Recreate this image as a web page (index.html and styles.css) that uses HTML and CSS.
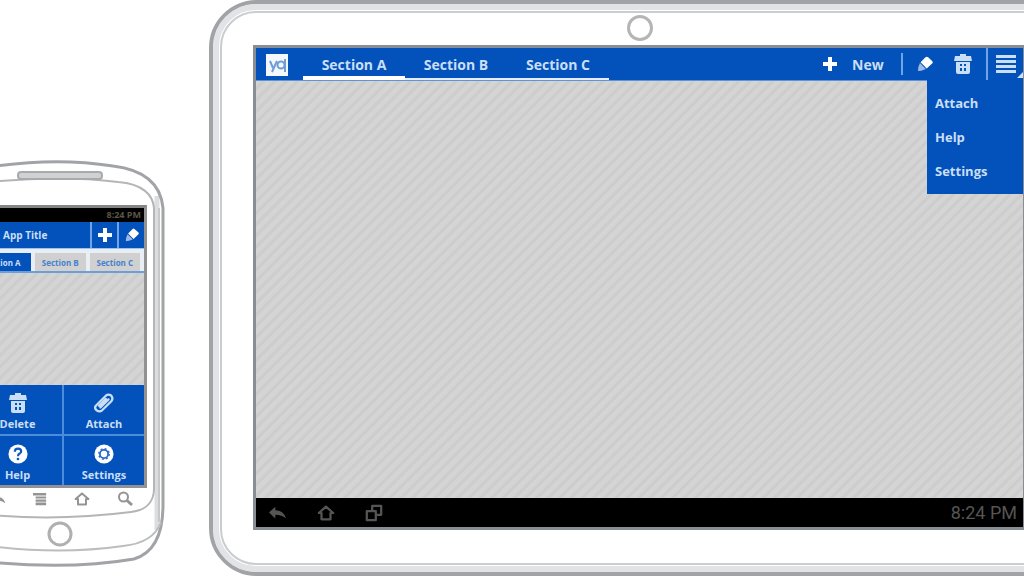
FILE: index.html
```html
<!DOCTYPE html>
<html lang="en">
<head>
<meta charset="utf-8">
<title>Action bar on phone and tablet</title>
<link rel="stylesheet" href="styles.css">
</head>
<body>
<svg class="sprite" aria-hidden="true">
  <symbol id="plus" viewBox="0 0 16 16"><path d="M6 1h4v5h5v4h-5v5H6v-5H1V6h5z"/></symbol>
  <symbol id="pencil" viewBox="0 0 18 18"><path d="M9.500 1.500q1.500-1.500 3 0l4.500 4q1.500 1.500 0 3L11 14 4 7z"/><path d="M3.300 8 10 14.700 5 16.500 1 17 1.500 12.500z" opacity=".6"/></symbol>
  <symbol id="trash" viewBox="0 0 18 20"><path d="M6 0h6v2h5l1 5H0l1-5h5z"/><path fill-rule="evenodd" d="M2 8h14v10q0 2-2 2H4q-2 0-2-2zm4 2v2h2v-2zm4 0v2h2v-2zm-4 4v3h2v-3zm4 0v3h2v-3z"/></symbol>
  <symbol id="clip" viewBox="0 0 22 22"><g fill="none" stroke="currentColor" stroke-width="2.500" stroke-linecap="round"><path d="M2 14 13 3q3-2.500 6 0 2.500 3 0 6L9 19q-3 2.500-6 0-3-2.500-1-5z"/><path d="M7 16 16 7M5.500 14 13 6.500"/></g></symbol>
  <symbol id="help" viewBox="0 0 22 22"><circle cx="11" cy="11" r="10.500"/><path d="M7.500 8.500q0-3.500 3.500-3.500t3.500 3q0 1.800-2 2.800-1.500.8-1.500 2.700" fill="none" stroke="#1058c0" stroke-width="2.400"/><circle cx="11" cy="16.500" r="1.500" fill="#1058c0"/></symbol>
  <symbol id="gear" viewBox="0 0 22 22"><circle cx="11" cy="11" r="10.500"/><circle cx="11" cy="11" r="4.500" fill="none" stroke="#2a6cc8" stroke-width="2"/><circle cx="11" cy="11" r="5.800" fill="none" stroke="#2a6cc8" stroke-width="1.500" stroke-dasharray="2.200 2.350"/></symbol>
  <symbol id="back" viewBox="0 0 20 16"><path d="M7 1v4q9 0 12 9-5-4-12-4v4L0 7.500z"/></symbol>
  <symbol id="home" viewBox="0 0 20 18"><path d="M10 2 18 9h-3v7H5V9H2z" fill="none" stroke="currentColor" stroke-width="2.500" stroke-linejoin="round"/></symbol>
  <symbol id="recent" viewBox="0 0 20 20"><path d="M8 7V2h10v10h-5M2 8h10v10H2z" fill="none" stroke="currentColor" stroke-width="2.500" stroke-linejoin="round"/></symbol>
  <symbol id="search" viewBox="0 0 16 16"><circle cx="6.500" cy="6" r="4.500" fill="none" stroke="currentColor" stroke-width="2"/><path d="m10 9.500 5 4.500" stroke="currentColor" stroke-width="3"/></symbol>
  <symbol id="list" viewBox="0 0 16 14"><path d="M0 0h15v3H0zM3 4h12v2.500H3zM3 7.500h12V10H3zM3 11h12v3H3z"/></symbol>
  <symbol id="menu" viewBox="0 0 20 18"><path d="M0 0h20v3H0zM0 5h20v3H0zM0 10h20v3H0zM0 15h20v3H0z"/></symbol>
</svg>

<main class="stage">
  <section class="phone" aria-label="Phone">
    <svg class="phone-case" viewBox="0 156 170 420" aria-hidden="true">
      <g fill="none">
        <path d="M157 196V530" stroke="#dcdde0" stroke-width="5"/>
        <path d="M-10 167Q55 157 113 166C146 170 161 186 163 208V505C163 535 154 553 134 559Q70 570-10 562" stroke="#a2a3a6" stroke-width="3"/>
        <path d="M-10 182Q60 175 118 182C143 184 153 195 154 208V485C155 502 147 510 131 512Q60 521-10 515" stroke="#b4b5b8" stroke-width="2"/>
        <path d="M-10 546Q60 555 123 546C143 544 156 536 161 522" stroke="#bcbdbf" stroke-width="2"/>
        <path d="M159 208V522" stroke="#c6c7c9" stroke-width="2"/>
      </g>
      <rect x="18" y="172" width="84" height="7" rx="3" fill="#d0d1d3" stroke="#a9aaac" stroke-width="2"/>
      <circle cx="60" cy="534" r="11" fill="#fff" stroke="#b0b0b0" stroke-width="3"/>
    </svg>
    <div class="phone-screen">
      <div class="phone-status">8:24 PM</div>
      <header class="phone-bar">
        <h2 class="phone-title">App Title</h2>
        <button class="phone-action" aria-label="New"><svg class="i16"><use href="#plus"/></svg></button>
        <button class="phone-action" aria-label="Edit"><svg class="i14"><use href="#pencil"/></svg></button>
      </header>
      <nav class="phone-tabs">
        <button class="phone-tab current">Section A</button>
        <button class="phone-tab">Section B</button>
        <button class="phone-tab">Section C</button>
      </nav>
      <div class="canvas phone-canvas"></div>
      <div class="phone-menu">
        <button class="tile"><svg class="i20"><use href="#trash"/></svg>Delete</button>
        <button class="tile"><svg class="i20"><use href="#clip"/></svg>Attach</button>
        <button class="tile"><svg class="i20 solid"><use href="#help"/></svg>Help</button>
        <button class="tile"><svg class="i20 solid"><use href="#gear"/></svg>Settings</button>
      </div>
    </div>
    <div class="phone-keys">
      <button class="key" aria-label="Back"><svg class="i14"><use href="#back"/></svg></button>
      <button class="key" aria-label="Menu"><svg class="i14"><use href="#list"/></svg></button>
      <button class="key" aria-label="Home"><svg class="i16"><use href="#home"/></svg></button>
      <button class="key" aria-label="Search"><svg class="i16"><use href="#search"/></svg></button>
    </div>
  </section>

  <section class="tablet" aria-label="Tablet">
    <div class="tablet-rim">
      <div class="tablet-face">
        <div class="camera"></div>
        <div class="tablet-screen">
          <header class="tablet-bar">
            <svg class="logo" viewBox="0 0 22 22" aria-hidden="true"><rect width="22" height="22" fill="#f4f8fd"/><g fill="none" stroke="#6f9ed8" stroke-width="2"><path d="m4 7 3 7M11 7 6 18"/><circle cx="15" cy="11" r="3.500"/><path d="M19 5v13"/></g></svg>
            <nav class="tabs">
              <button class="tab current">Section A</button>
              <button class="tab">Section B</button>
              <button class="tab">Section C</button>
            </nav>
            <div class="actions">
              <button class="action new"><svg class="i16 solid"><use href="#plus"/></svg>New</button>
              <button class="action edit" aria-label="Edit"><svg class="i16 solid"><use href="#pencil"/></svg></button>
              <button class="action delete" aria-label="Delete"><svg class="i20"><use href="#trash"/></svg></button>
              <button class="action overflow" aria-label="More"><svg class="i20"><use href="#menu"/></svg></button>
            </div>
            <div class="dropdown">
              <button class="option">Attach</button>
              <button class="option">Help</button>
              <button class="option">Settings</button>
            </div>
          </header>
          <div class="canvas"></div>
          <footer class="system">
            <button class="sys" aria-label="Back"><svg class="i18"><use href="#back"/></svg></button>
            <button class="sys" aria-label="Home"><svg class="i18"><use href="#home"/></svg></button>
            <button class="sys" aria-label="Recent apps"><svg class="i18"><use href="#recent"/></svg></button>
            <span class="clock">8:24 PM</span>
          </footer>
        </div>
      </div>
    </div>
  </section>
</main>
</body>
</html>
```
FILE: styles.css
```css
:root {
  --blue: #0351bb;
  --pale: #c9dff6;
  --line: #6fa5e4;
}
* { box-sizing: border-box; }
body {
  margin: 0;
  background: #fff;
  font-family: "Open Sans", "Noto Sans", sans-serif;
  font-weight: 700;
}
button {
  margin: 0;
  padding: 0;
  border: 0;
  background: none;
  color: inherit;
  font: inherit;
}
svg { fill: currentColor; flex: none; display: block; }
.sprite { position: absolute; width: 0; height: 0; }
.i14 { width: 14px; height: 14px; }
.i16 { width: 16px; height: 16px; }
.i18 { width: 18px; height: 18px; }
.i20 { width: 20px; height: 20px; }
.solid { color: #fff; }

.stage {
  display: flex;
  align-items: stretch;
  height: 100vh;
  min-height: 480px;
  overflow: hidden;
}
.canvas {
  flex: 1;
  background: repeating-linear-gradient(135deg, #d5d5d5 0, #d4d4d4 3px, #cccccc 5px, #cccccc 6px, #d5d5d5 8px);
}

/* Phone */
.phone {
  position: relative;
  flex: none;
  align-self: flex-end;
  width: 170px;
  height: 420px;
  padding-top: 49px;
}
.phone-case {
  position: absolute;
  inset: 0;
  width: 100%;
  height: 100%;
}
.phone-screen {
  position: relative;
  display: flex;
  flex-direction: column;
  height: 283px;
  margin-left: -30px;
  margin-right: 23px;
  border: 3px solid #929292;
  border-top-color: #858585;
  background: var(--blue);
  color: var(--pale);
}
.phone-status {
  padding-right: 3px;
  background: #000;
  color: #5c5548;
  font-size: 9px;
  line-height: 14px;
  text-align: right;
}
.phone-bar { display: flex; height: 26px; align-items: stretch; }
.phone-title {
  flex: 1;
  margin: 0;
  padding-left: 30px;
  font-size: 10px;
  line-height: 26px;
}
.phone-action {
  display: grid;
  place-items: center;
  width: 27px;
  border-left: 2px solid var(--line);
  color: #fff;
}
.phone-tabs {
  display: grid;
  grid-template-columns: 58px 1fr 1fr;
  gap: 4px;
  height: 25px;
  padding: 4px 4px 0 0;
  background: #e9eef4;
  border-bottom: 2px solid #6d9ed8;
  border-top: 1px solid #9cc3ee;
}
.phone-tab {
  background: #d0d0d0;
  color: #4682cd;
  font-size: 8px;
  white-space: nowrap;
}
.phone-tab.current { background: var(--blue); color: var(--pale); }
.phone-menu {
  display: grid;
  grid-template-columns: 89px 1fr;
  gap: 2px;
  background: #4b8ddb;
}
.tile {
  display: flex;
  flex-direction: column;
  align-items: center;
  justify-content: flex-end;
  gap: 3px;
  height: 49px;
  padding-bottom: 2px;
  background: var(--blue);
  font-size: 11px;
  line-height: 16px;
}
.phone-keys {
  position: relative;
  display: flex;
  justify-content: space-between;
  margin: 3px 37px 0 -8px;
  color: #949494;
}
.key { display: grid; place-items: center; height: 16px; }

/* Tablet */
.tablet {
  flex: 1;
  display: flex;
  margin: 0 -46px 0 39px;
  border: 4px solid #a2a3a6;
  border-radius: 48px;
  background: #fff;
}
.tablet-rim {
  flex: 1;
  display: flex;
  padding: 1px;
  border: 6px solid #e2e3e6;
  border-radius: 43px;
}
.tablet-face {
  flex: 1;
  display: flex;
  flex-direction: column;
  align-items: stretch;
  border: 2px solid #cbccd0;
  border-radius: 36px;
  padding: 2px 31px 33px;
}
.camera {
  align-self: center;
  flex: none;
  width: 26px;
  height: 26px;
  margin-bottom: 4px;
  border: 3px solid #b5b5b5;
  border-radius: 50%;
}
.tablet-screen {
  flex: 1;
  display: flex;
  flex-direction: column;
  border: 3px solid #898e94;
}
.tablet-bar {
  position: relative;
  display: flex;
  align-items: stretch;
  height: 33px;
  background: var(--blue);
  border-bottom: 1px solid #5d96d8;
  color: var(--pale);
  font-size: 14px;
}
.logo { width: 22px; height: 22px; margin: 6px 15px 0 10px; }
.tabs { display: flex; }
.tab { width: 102px; border-bottom: 2px solid #e3eefa; padding-top: 2px; }
.tab.current { border-bottom: 4px solid #fff; padding-top: 4px; }
.actions { display: flex; flex: 1; justify-content: flex-end; }
.action {
  position: relative;
  display: flex;
  align-items: center;
  justify-content: center;
}
.action.new { width: 79px; gap: 14px; justify-content: flex-start; }
.action.edit { width: 39px; gap: 14px; justify-content: flex-start; }
.action.edit::before {
  content: "";
  width: 2px;
  height: 22px;
  background: var(--line);
}
.action.delete { width: 46px; }
.action.overflow { width: 37px; border-left: 2px solid var(--line); }
.action.overflow::after {
  content: "";
  position: absolute;
  right: 0;
  bottom: 2px;
  border: 3px solid var(--pale);
  border-top-color: transparent;
  border-left-color: transparent;
}
.dropdown {
  position: absolute;
  z-index: 1;
  top: 100%;
  right: 0;
  display: flex;
  flex-direction: column;
  width: 96px;
  padding: 6px 0;
  background: var(--blue);
  font-size: 13px;
}
.option { padding-left: 8px; line-height: 34px; text-align: left; }
.system {
  display: flex;
  align-items: center;
  gap: 30px;
  height: 29px;
  padding: 0 6px 0 13px;
  background: #000;
  color: #555;
}
.clock {
  margin-left: auto;
  font-family: "Roboto", "Noto Sans", sans-serif;
  font-size: 18px;
  font-weight: 400;
}
```
